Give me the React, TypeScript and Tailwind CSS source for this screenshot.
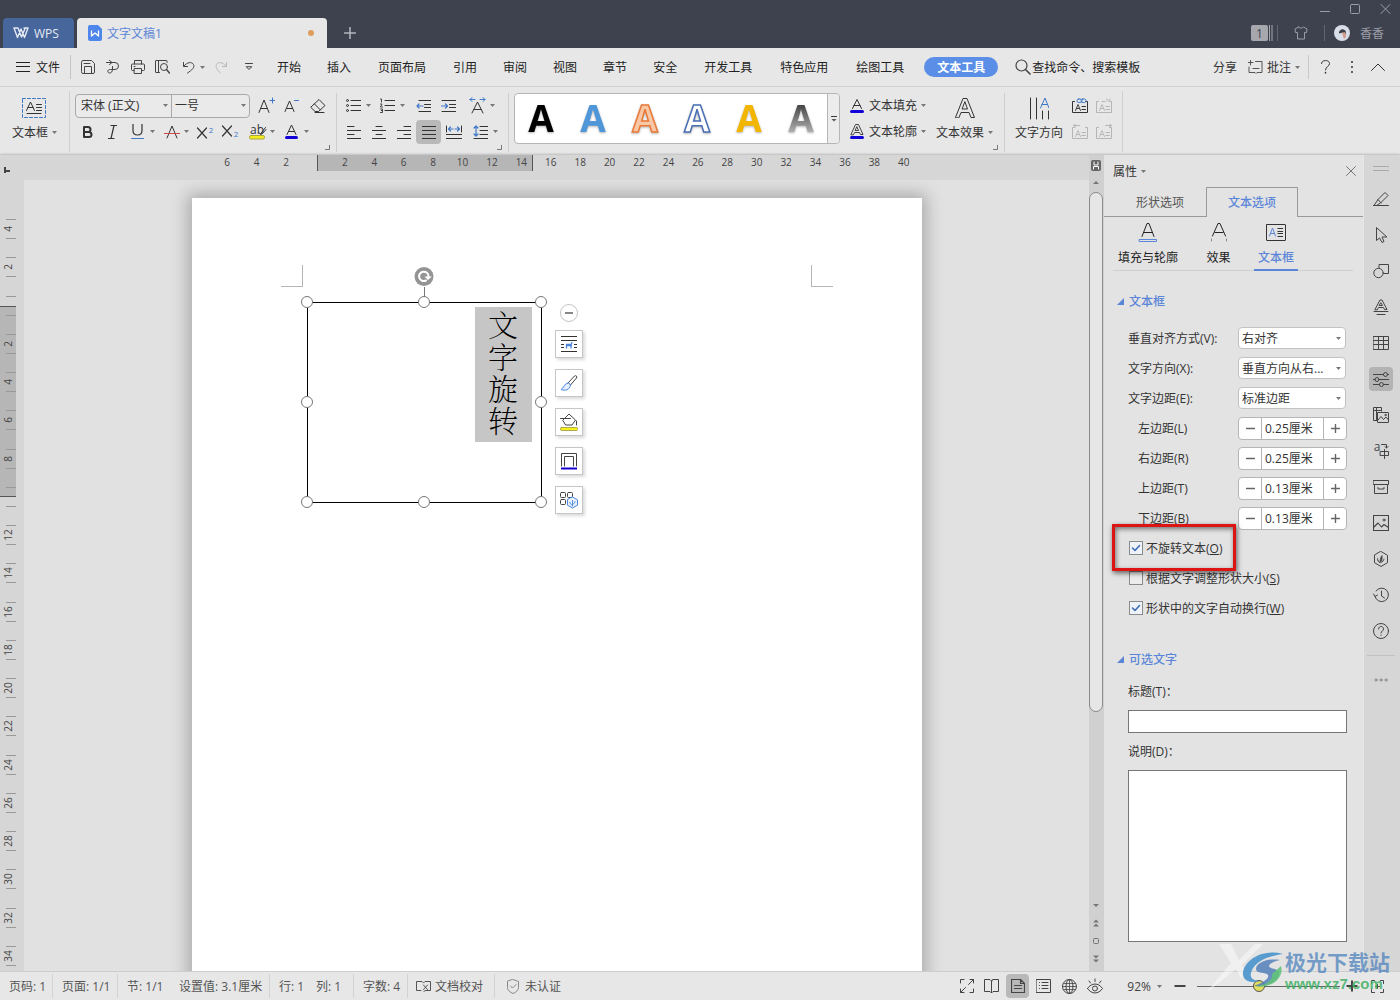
import type { ReactNode } from "react"
import clsx from "clsx"

const Svg = ({ w = 16, h = 16, className, children }: { w?: number; h?: number; className?: string; children: ReactNode }) => (
  <svg
    width={w}
    height={h}
    viewBox={`0 0 ${w} ${h}`}
    className={clsx("shrink-0", className)}
    fill="none"
    stroke="currentColor"
    strokeLinecap="round"
    strokeLinejoin="round"
    aria-hidden="true"
  >
    {children}
  </svg>
)

const Caret = ({ className }: { className?: string }) => (
  <svg width="5" height="3" viewBox="0 0 5 3" className={clsx("shrink-0 fill-[#777]", className)} aria-hidden="true">
    <path d="M0 0h5L2.5 3z" />
  </svg>
)

const Letter = ({ x, y, size = 16, fill = "currentColor", children }: { x: number; y: number; size?: number; fill?: string; children: string }) => (
  <text x={x} y={y} fontSize={size} fill={fill} stroke="none" textAnchor="middle">{children}</text>
)

/* ---------- title bar ---------- */

const TitleBar = () => (
  <header className="flex h-12 shrink-0 justify-between bg-[#3e424f]">
    <div className="flex items-end pl-[3px]">
      <button className="flex h-[30px] w-[71px] items-center gap-[5px] rounded-t-sm bg-[#47669c] pl-2.5 text-[#e4e9f2]">
        <Svg w={16} h={12}>
          <path d="M1 1h4l3.500 9L12 1.500M1 1l3.500 9.500L8 2l3.500 8.500L15 1h-4" strokeWidth="1.400" />
        </Svg>
        WPS
      </button>
      <div className="ml-[3px] flex h-[30px] w-[250px] items-center rounded-t bg-[#e7e7e7] pr-[13px] pl-[11px] text-[#5b86d8]">
        <Svg w={14} h={16}>
          <path d="M2 0h8l4 4v10a2 2 0 0 1-2 2H2a2 2 0 0 1-2-2V2a2 2 0 0 1 2-2z" fill="#4f86ec" stroke="none" />
          <path d="M3.500 6v5L7 8l3.500 3V6" stroke="#fff" strokeWidth="1.300" />
        </Svg>
        <span className="ml-[5px] flex-1">文字文稿1</span>
        <span className="size-1.5 rounded-full bg-[#dd9d5c]" />
      </div>
      <button aria-label="新建" className="flex size-[30px] items-center justify-center pl-4 text-[#b4b7bd]">
        <Svg w={12} h={12}><path d="M6 0.500v11M0.500 6h11" strokeWidth="1.500" /></Svg>
      </button>
    </div>
    <div className="flex flex-col items-end text-[#9a9da6]">
      <div className="flex h-[18px] items-center gap-5 pr-[9px]">
        <button aria-label="最小化"><Svg w={10} h={10}><path d="M0.500 7.500h9" /></Svg></button>
        <button aria-label="最大化"><Svg w={10} h={10}><rect x="0.500" y="0.500" width="9" height="9" rx="1" /></Svg></button>
        <button aria-label="关闭"><Svg w={11} h={10}><path d="M1 0.500l9 9M10 0.500l-9 9" /></Svg></button>
      </div>
      <div className="flex h-[30px] items-center pr-4">
        <span className="flex h-4 w-[17px] items-center justify-center rounded-xs bg-[#a6a8ae] text-[#3e424f]">1</span>
        <Svg w={5} h={16}><path d="M1.500 0v16M4 0v16" stroke="#a6a8ae" strokeLinecap="butt" /></Svg>
        <span className="ml-1 h-4 w-px bg-[#62656f]" />
        <button aria-label="皮肤" className="mx-4">
          <Svg w={14} h={14}><path d="M4.500 1 1 3l0.500 3.500h2V13h7V6.500h2L13 3 9.500 1C8.500 2.500 5.500 2.500 4.500 1z" /></Svg>
        </button>
        <span className="h-4 w-px bg-[#62656f]" />
        <Svg w={16} h={16} className="ml-[9px]">
          <circle cx="8" cy="8" r="8" fill="#d9dfe8" stroke="none" />
          <path d="M5 7c1.500-4 6-3.500 7 0l-1 4-2-3.500-4 1z" fill="#3c3d45" stroke="none" />
          <path d="M8 8l3-1 1 5-2 2z" fill="#d59c8e" stroke="none" />
        </Svg>
        <span className="ml-2.5">香香</span>
      </div>
    </div>
  </header>
)

/* ---------- menu ---------- */

const menus = ["开始", "插入", "页面布局", "引用", "审阅", "视图", "章节", "安全", "开发工具", "特色应用", "绘图工具"]

const MenuBar = () => (
  <nav className="flex h-[39px] shrink-0 items-center border-b border-[#d2d2d2] text-[#222]">
    <button className="flex items-center gap-1.5 pl-4">
      <Svg w={14} h={12}><path d="M0 1.500h14M0 5.500h14M0 10.500h14" /></Svg>
      文件
    </button>
    <span className="ml-2.5 h-6 w-px bg-[#c4c4c4]" />
    <div className="ml-1 flex items-center text-[#444]">
      <button aria-label="保存" className="flex w-[25px] justify-center">
        <Svg w={14} h={14}><path d="M0.500 2a1.500 1.500 0 0 1 1.500-1.500h8.500l3 3V12a1.500 1.500 0 0 1-1.500 1.500H2A1.500 1.500 0 0 1 0.500 12zM3.500 13V6.500h7V13M3 3.500h6" /></Svg>
      </button>
      <button aria-label="输出为PDF" className="flex w-[25px] justify-center">
        <Svg w={14} h={14}><path d="M0.500 2.500H9a3.500 3.500 0 0 1 0 7H6.500V6.500M3.500 0.500l2.500 2-2.500 2M6.500 9.500c0 2-1 3.500-3 3.500s-3-3.500 1-3.500h2" /></Svg>
      </button>
      <button aria-label="打印" className="flex w-[25px] justify-center">
        <Svg w={14} h={14}><path d="M3.500 4V0.500h7V4M3 10.500H1.500a1 1 0 0 1-1-1V5a1 1 0 0 1 1-1h11a1 1 0 0 1 1 1v4.500a1 1 0 0 1-1 1H11M3.500 8.500h7v5h-7zM3 6.500h1" /></Svg>
      </button>
      <button aria-label="打印预览" className="flex w-[25px] justify-center">
        <Svg w={15} h={14}><path d="M4.500 12.500H1a0.500 0.500 0 0 1-0.500-0.500V1A0.500 0.500 0 0 1 1 0.500h10.500a0.500 0.500 0 0 1 0.500 0.500v1.500M3.500 0.500v12" /><circle cx="9" cy="7" r="3.500" /><path d="M11.500 9.500l3 3.500" strokeWidth="1.500" /></Svg>
      </button>
      <button aria-label="撤销" className="flex w-8 items-center justify-end gap-[5px] pr-0.5">
        <Svg w={12} h={13}><path d="M0.500 1.500v4h4M1 5c3-4 8-4.500 9.500-1.500S9 9 4.500 12" /></Svg>
        <Caret />
      </button>
      <button aria-label="恢复" className="flex w-6 justify-end pr-1 text-[#b9b9b9]">
        <Svg w={12} h={13}><path d="M11.500 1.500v4h-4M11 5C8 1 3 0.500 1.500 3.500S3 9 5 12" /></Svg>
      </button>
      <button aria-label="自定义快速访问" className="flex w-7 justify-center pl-2">
        <Svg w={8} h={8}><path d="M0.500 0.500h7M1.500 4L4 6.500 6.500 4z" /></Svg>
      </button>
    </div>
    <div className="ml-[5px] flex items-center">
      {menus.map((m) => (
        <button key={m} className={clsx("whitespace-nowrap", m.length > 2 ? "px-[14px]" : "px-[13px]")}>{m}</button>
      ))}
      <button className="ml-1.5 h-5 rounded-full bg-[#5b8ee6] px-[13px] font-bold whitespace-nowrap text-white">文本工具</button>
    </div>
    <button className="ml-[17px] flex items-center whitespace-nowrap">
      <Svg w={17} h={16} className="text-[#444]"><circle cx="6.500" cy="6.500" r="5.500" strokeWidth="1.200" /><path d="M10.500 10.500l4.500 4.500" strokeWidth="1.600" /></Svg>
      查找命令、搜索模板
    </button>
    <div className="ml-auto flex items-center whitespace-nowrap text-[#333]">
      <button>分享</button>
      <button className="ml-[11px] flex items-center gap-1">
        <Svg w={15} h={14} className="text-[#555]"><path d="M0 2.500h5M2.500 0v5M7.500 1.500h6.500v11H9l-1 1-1-1H1V7M5 8.500h6" /></Svg>
        批注 <Caret />
      </button>
      <span className="ml-2 h-6 w-px bg-[#c9c9c9]" />
      <button aria-label="帮助" className="ml-3"><Svg w={9} h={14}><path d="M0.500 3.500c0-4 8-4 8 0 0 3-4 3-4 6.500" /><path d="M4.500 12.500v0.500" strokeWidth="1.500" /></Svg></button>
      <button aria-label="更多" className="ml-5"><Svg w={4} h={14}><path d="M2 2v0.100M2 7v0.100M2 12v0.100" strokeWidth="2" /></Svg></button>
      <button aria-label="折叠功能区" className="mr-[15px] ml-[17px]"><Svg w={14} h={8}><path d="M0.500 7.500L7 1l6.500 6.500" /></Svg></button>
    </div>
  </nav>
)

/* ---------- ribbon ---------- */

const Tool = ({ label, w = "w-[25px]", caret, active, children }: { label: string; w?: string; caret?: boolean; active?: boolean; children: ReactNode }) => (
  <button aria-label={label} className={clsx("flex h-6 shrink-0 items-center rounded", w, active && "bg-[#b9b9b9]")}>
    <span className={clsx("flex justify-center", caret ? "w-[25px]" : "w-full")}>{children}</span>
    {caret && <Caret />}
  </button>
)

const Launcher = () => (
  <Svg w={5} h={5} className="absolute right-[6px] bottom-0.5 text-[#777]"><path d="M4.500 0v4.500H0" /></Svg>
)

const Row = ({ children }: { children: ReactNode }) => <div className="flex h-[25px] items-center">{children}</div>

const FontGroup = () => (
  <div className="relative flex w-[267px] shrink-0 flex-col gap-px border-r border-[#cfcfcf] pl-[5px]">
    <Row>
      <div className="mr-[3px] flex h-6 w-[175px] rounded border border-[#a9a9a9] bg-[#eaeaea]">
        <div className="relative flex w-24 items-center border-r border-[#a9a9a9]">
          <select aria-label="字体" className="w-full appearance-none pl-[5px] outline-none"><option>宋体 (正文)</option></select>
          <Caret className="pointer-events-none absolute right-[3px]" />
        </div>
        <div className="relative flex flex-1 items-center">
          <select aria-label="字号" className="w-full appearance-none pl-[3px] outline-none"><option>一号</option></select>
          <Caret className="pointer-events-none absolute right-[3px]" />
        </div>
      </div>
      <Tool label="增大字号" w="w-[26px]">
        <Svg w={17} h={17}><path d="M1 15.500L6 3l5 12.500M3 11.500h6" /><path d="M14.500 1v5M12 3.500h5" stroke="#3f78c6" /></Svg>
      </Tool>
      <Tool label="减小字号" w="w-[26px]">
        <Svg w={16} h={17}><path d="M1 14.500L5.500 4l4.500 10.500M3 11.500h5.500" /><path d="M10.500 3.500h4" stroke="#3f78c6" /></Svg>
      </Tool>
      <Tool label="清除格式" w="w-[27px]">
        <Svg w={17} h={16}><path d="M1 9l8-7.500 6 6-6.500 6H5.500zM4.500 6l6 6M5 14.500h9" /></Svg>
      </Tool>
    </Row>
    <Row>
      <Tool label="加粗"><Svg w={11} h={12}><path d="M2 1h4a2.500 2.500 0 0 1 0 5H2zM2 6h5a2.500 2.500 0 0 1 0 5H2z" strokeWidth="2" /></Svg></Tool>
      <Tool label="倾斜"><Svg w={9} h={14}><path d="M3 0.500h5.500M0.500 13.500H6M6 0.500l-3 13" strokeWidth="1.200" /></Svg></Tool>
      <Tool label="下划线" w="w-[34px]" caret>
        <Svg w={13} h={15}><path d="M2 0.500v6c0 6 9 6 9 0v-6" strokeWidth="1.200" /><path d="M0.500 14.500h12" stroke="#3f78c6" /></Svg>
      </Tool>
      <Tool label="删除线" w="w-[34px]" caret>
        <Svg w={16} h={14}><path d="M3 13L8 1l5 12" /><path d="M0 8.500h16" stroke="#d04848" /></Svg>
      </Tool>
      <Tool label="上标"><Svg w={19} h={15}><path d="M1.500 4l9 10M10.500 4l-9 10" strokeWidth="1.200" /><Letter x={15} y={9} size={8} fill="#3f78c6">2</Letter></Svg></Tool>
      <Tool label="下标"><Svg w={19} h={15}><path d="M1.500 2l9 10M10.500 2l-9 10" strokeWidth="1.200" /><Letter x={15} y={13} size={8} fill="#3f78c6">2</Letter></Svg></Tool>
      <span className="w-0.5" />
      <Tool label="突出显示" w="w-[34px]" caret>
        <Svg w={19} h={17}><Letter x={9} y={11} size={12}>ab</Letter><path d="M17.500 4.500l-4 5-1 2 2-1 3.500-4" /><rect x="1.500" y="12.500" width="15" height="3.500" rx="1.500" fill="#f5ee1f" stroke="#a9a53d" /></Svg>
      </Tool>
      <Tool label="字体颜色" w="w-[34px]" caret>
        <Svg w={13} h={16}><path d="M2 10.500L6.500 1 11 10.500M3.500 7.500h6" /><path d="M1.500 13.500h10" stroke="#1200d8" strokeWidth="3" /></Svg>
      </Tool>
    </Row>
    <Launcher />
  </div>
)

const ParagraphGroup = () => (
  <div className="relative flex w-[172px] shrink-0 flex-col gap-px border-r border-[#cfcfcf] pl-1">
    <Row>
      <Tool label="项目符号" w="w-[34px]" caret>
        <Svg w={15} h={15}><path d="M5 2.500h10M5 7.500h10M5 12.500h10" /><circle cx="1.500" cy="2.500" r="1" /><circle cx="1.500" cy="7.500" r="1" /><circle cx="1.500" cy="12.500" r="1" /></Svg>
      </Tool>
      <Tool label="编号" w="w-[34px]" caret>
        <Svg w={15} h={15}><path d="M5 2.500h10M5 7.500h10M5 12.500h10" /><path d="M0.500 1h1V4M0.500 6h1.500L0.500 9h2M0.500 11h2v1.500H1h1.500V14.500h-2" strokeWidth="0.900" /></Svg>
      </Tool>
      <span className="w-0.5" />
      <Tool label="减少缩进">
        <Svg w={15} h={14}><path d="M3 1.500h12M8.500 5.500h6.500M8.500 8.500h6.500M3 12.500h12" /><path d="M1 7h6M3 5L1 7l2 2" stroke="#3f78c6" strokeWidth="1.200" /></Svg>
      </Tool>
      <Tool label="增加缩进">
        <Svg w={15} h={14}><path d="M1 1.500h14M8.500 5.500h6.500M8.500 8.500h6.500M1 12.500h14" /><path d="M0.500 7h6M4.500 5l2 2-2 2" stroke="#3f78c6" strokeWidth="1.200" /></Svg>
      </Tool>
      <span className="w-1" />
      <Tool label="字符缩放" w="w-[32px]" caret>
        <Svg w={17} h={17}><path d="M3 16L8.500 5 14 16M5 12.500h7" /><path d="M1 2.500h5M3 0.500l-2 2 2 2M11 2.500h5M14 0.500l2 2-2 2" stroke="#3f78c6" /></Svg>
      </Tool>
    </Row>
    <Row>
      <Tool label="左对齐"><Svg w={14} h={14}><path d="M0 1.500h7M0 5.500h14M0 9.500h7M0 13.500h14" /></Svg></Tool>
      <Tool label="居中"><Svg w={14} h={14}><path d="M4 1.500h6M0 5.500h14M4 9.500h6M0 13.500h14" /></Svg></Tool>
      <Tool label="右对齐"><Svg w={14} h={14}><path d="M7 1.500h7M0 5.500h14M7 9.500h7M0 13.500h14" /></Svg></Tool>
      <Tool label="两端对齐" active><Svg w={14} h={14}><path d="M0 1.500h14M0 5.500h14M0 9.500h14M0 13.500h14" /></Svg></Tool>
      <Tool label="分散对齐">
        <Svg w={16} h={14}><path d="M0.500 1v6M15.500 1v6M0 9.500h16M0 13.500h16" /><path d="M3 4h4M4.500 2l-2 2 2 2M9 4h4M11.500 2l2 2-2 2" stroke="#3f78c6" strokeWidth="1.200" /></Svg>
      </Tool>
      <span className="w-0.5" />
      <Tool label="行距" w="w-[34px]" caret>
        <Svg w={15} h={14}><path d="M7 1.500h8M7 5.500h8M7 9.500h8M1 13.500h14" /><path d="M3 1v10M1 3l2-2 2 2M1 9l2 2 2-2" stroke="#3f78c6" strokeWidth="1.200" /></Svg>
      </Tool>
    </Row>
    <Launcher />
  </div>
)

const wordArt = [
  { fill: "#000", stroke: "none" },
  { fill: "#4f97d9", stroke: "none" },
  { fill: "#f7c7a6", stroke: "#ea7a37" },
  { fill: "#fff", stroke: "#4a6fb5" },
  { fill: "#f2b600", stroke: "none" },
  { fill: "url(#grayFade)", stroke: "none" },
]

const TextStyleGroup = () => (
  <div className="relative flex w-[496px] shrink-0 border-r border-[#cfcfcf] pl-[5px]">
    <div className="flex h-[51px] rounded border border-[#b5b5b5] bg-white">
      {wordArt.map((a, i) => (
        <button key={i} aria-label={`艺术字样式${i + 1}`} className="w-[52px]">
          <svg width="52" height="49" viewBox="0 0 52 49" className="font-bold drop-shadow-[0_1px_1px_rgba(0,0,0,0.3)]">
            <defs>
              <linearGradient id="grayFade" x1="0" y1="0" x2="0" y2="1">
                <stop offset="0.250" stopColor="#444" />
                <stop offset="0.850" stopColor="#bbb" />
              </linearGradient>
            </defs>
            <text x="26" y="38" fontSize="37" textAnchor="middle" fill={a.fill} stroke={a.stroke} strokeWidth="1.500">A</text>
          </svg>
        </button>
      ))}
      <button aria-label="更多样式" className="flex w-3 items-center justify-center rounded-r border-l border-[#b5b5b5] bg-[#ececec]">
        <Svg w={6} h={6}><path d="M0.500 0.500h5" /><path d="M0.500 3h5L3 5.500z" fill="#555" stroke="none" /></Svg>
      </button>
    </div>
    <div className="ml-2.5 flex flex-col gap-px">
      <Row>
        <button className="flex items-center whitespace-nowrap">
          <Svg w={14} h={16} className="mr-[5px]"><path d="M2.500 10.500L7 1.500l4.500 9M4 7.500h6" /><path d="M1.500 13.500h11" stroke="#1200d8" strokeWidth="3" /></Svg>
          文本填充<Caret className="ml-1" />
        </button>
      </Row>
      <Row>
        <button className="flex items-center whitespace-nowrap">
          <Svg w={14} h={16} className="mr-[5px]"><path d="M1 10.500L5.500 0.500h3l4.500 10h-2.500l-1-2h-5l-1 2zM5.500 6.500h3L7 3z" strokeWidth="0.900" /><path d="M1.500 13.500h11" stroke="#1200d8" strokeWidth="3" /></Svg>
          文本轮廓<Caret className="ml-1" />
        </button>
      </Row>
    </div>
    <button className="ml-2.5 flex h-[51px] flex-col items-center gap-1.5 pt-[5px] whitespace-nowrap">
      <Svg w={20} h={20}><path d="M0.500 19.500L8 0.500h4l7.500 19H16l-2-5H6l-2 5zM7.500 11h5L10 4z" /></Svg>
      <span className="flex items-center gap-1">文本效果<Caret /></span>
    </button>
    <Launcher />
  </div>
)

const BoxIcon = ({ muted, mark }: { muted?: boolean; mark: "link" | "break" | "prev" | "next" }) => (
  <Svg w={17} h={16} className={muted ? "text-[#b5b5b5]" : "text-[#333]"}>
    <path d="M2.500 3.500h-2v11h15v-11h-2" />
    <path d="M3.500 12.500l2.500-6 2.500 6M4.500 10.500h3" strokeWidth="0.900" />
    <path d="M10 8.500h3.500M10 11.500h3.500" />
    {mark === "link" && <g stroke="#3f78c6"><rect x="5" y="1" width="5" height="3.500" rx="1.700" /><rect x="9" y="1" width="5" height="3.500" rx="1.700" /></g>}
    {mark === "break" && <path d="M6 3.500h3M11 1v2M14 1l-1 2" />}
    {mark === "prev" && <path d="M1.500 1.500h6M3.500 0l-2 1.500 2 1.500" />}
    {mark === "next" && <path d="M9.500 1.500h6M13.500 0l2 1.500-2 1.500" />}
  </Svg>
)

const Ribbon = () => (
  <div className="flex h-[68px] shrink-0 pt-1 pb-[3px] text-[#333]">
    <div className="flex w-[70px] shrink-0 justify-center border-r border-[#cfcfcf] pt-0.5">
      <button className="flex h-[51px] flex-col items-center gap-1.5 pt-[5px] whitespace-nowrap">
        <Svg w={24} h={20}><rect x="0.500" y="0.500" width="23" height="19" stroke="#3f78c6" strokeDasharray="3 2" /><path d="M4.500 12.500L8.500 4l4 8.500M6 9.500h5M14.500 6.500h5M14.500 9.500h5M14.500 12.500h5M5 15.500h14" /></Svg>
        <span className="flex items-center gap-1">文本框<Caret /></span>
      </button>
    </div>
    <div className="flex pt-0.5"><FontGroup /><ParagraphGroup /><TextStyleGroup /></div>
    <div className="flex w-[118px] shrink-0 border-r border-[#cfcfcf] pt-0.5 pl-2.5">
      <button className="flex h-[51px] flex-col items-center gap-1 pt-1 whitespace-nowrap">
        <Svg w={20} h={23}><path d="M1.500 1v21M7.500 1v21M13.500 14v8M19.500 14v8" /><path d="M11.500 11L16 1l4 10M13 7.500h5.500" stroke="#3f78c6" /></Svg>
        文字方向
      </button>
      <div className="ml-[5px] flex flex-col gap-px">
        <Row>
          <Tool label="创建链接" w="w-6"><BoxIcon mark="link" /></Tool>
          <Tool label="断开链接" w="w-6"><BoxIcon muted mark="break" /></Tool>
        </Row>
        <Row>
          <Tool label="前一文本框" w="w-6"><BoxIcon muted mark="prev" /></Tool>
          <Tool label="下一文本框" w="w-6"><BoxIcon muted mark="next" /></Tool>
        </Row>
      </div>
    </div>
  </div>
)

/* ---------- document ---------- */

const hMarks = ["6", "4", "2", "", "2", "4", "6", "8", "10", "12", "14", "16", "18", "20", "22", "24", "26", "28", "30", "32", "34", "36", "38", "40"]
const vMarks = ["4", "2", "", "2", "4", "6", "8", "", "12", "14", "16", "18", "20", "22", "24", "26", "28", "30", "32", "34"]

const HorizontalRuler = () => (
  <div className="relative flex h-[25px] shrink-0 justify-center bg-[#d6d6d6] pl-[18px] text-[10px] leading-[15px] text-[#444]">
    <div className="relative grid w-[706px] grid-cols-24 text-center">
      <span className="absolute top-0 left-[104px] h-4 w-[216px] border-x border-[#555] bg-[#b6b6b6]" />
      {hMarks.map((m, i) => <span key={i} className="relative">{m}</span>)}
    </div>
  </div>
)

const VerticalRuler = () => (
  <div className="w-6 shrink-0 overflow-hidden bg-[#d6d6d6] text-[10px] text-[#444]">
    <Svg w={16} h={25} className="block"><path d="M5 12v6M4 16h6" strokeWidth="2" strokeLinecap="butt" /></Svg>
    <div className="relative mt-[30px] grid h-[765px] grid-rows-20">
      <span className="absolute top-[96px] left-0 h-[191px] w-4 border-y border-[#555] bg-[#b6b6b6]" />
      {vMarks.map((m, i) => (
        <div key={i} className="relative flex items-center pl-1.5">
          <span className="flex h-5 w-2.5 items-center border-y border-[#999]">
            <span className="-ml-1 w-3 -rotate-90 text-center leading-3">{m}</span>
          </span>
        </div>
      ))}
    </div>
  </div>
)

const handles = [
  "-top-[7px] -left-[7px]", "-top-[7px] left-[110px]", "-top-[7px] -right-1.5",
  "top-[93px] -left-[7px]", "top-[93px] -right-1.5",
  "-bottom-1.5 -left-[7px]", "-bottom-1.5 left-[110px]", "-bottom-1.5 -right-1.5",
]

const floatTools: { label: string; icon: ReactNode }[] = [
  { label: "环绕方式", icon: <><path d="M1 1.500h16M1 5.500h16M1 9.500h3M1 12.500h3M14 9.500h3M14 12.500h3M1 16.500h16" stroke="#333" strokeLinecap="butt" /><path d="M6.500 13V9.500h4.500L12 7.500M11 9.500v3.500M6.500 10.500h5" stroke="#4a86e0" strokeWidth="1.300" /></> },
  { label: "形状样式", icon: <><path d="M8 9l6.500-7c1.500-1 3 0.500 2 2L10.500 11z" stroke="#444" /><path d="M8 9C4 9.500 4 14 1 15.500c4 1.500 9 0.500 9.500-4.500z" stroke="#4a86e0" fill="#e6effc" /></> },
  { label: "形状填充", icon: <><path d="M3 7l6-6 6.500 6L12 12H6zM0.500 5.500h10M16.500 8v4" stroke="#444" /><rect x="0.500" y="14.500" width="17" height="3" rx="1" fill="#f6f01d" stroke="#8d8a38" strokeWidth="0.700" /></> },
  { label: "形状轮廓", icon: <><path d="M1.500 14V1.500h15V14M4.500 14V4.500h9V14" stroke="#444" /><path d="M1 16.500h16" stroke="#1400d0" strokeWidth="2" strokeLinecap="butt" /></> },
  { label: "更多", icon: <><rect x="0.500" y="1.500" width="5" height="5" rx="1" stroke="#444" /><rect x="7.500" y="1.500" width="5" height="5" rx="1" stroke="#444" /><rect x="0.500" y="8.500" width="5" height="5" rx="1" stroke="#444" /><path d="M12.500 6l5 2.800v5.400l-5 2.800-5-2.800V8.800z" fill="#e8f0fc" stroke="#4a86e0" /><path d="M12.500 15V9.500M12.500 14c-2 0-2.500-1.500-2.500-2.500M12.500 13c1.500 0 2.500-1 2.500-2.500" stroke="#4a86e0" strokeWidth="0.900" /></> },
]

const Page = () => (
  <div className="relative mx-auto mt-[18px] h-[900px] w-[730px] bg-white shadow-[0_0_16px_4px_rgba(0,0,0,0.25)]">
    <span className="absolute top-[67px] left-[89px] size-[22px] border-r border-b border-[#b5b5b5]" />
    <span className="absolute top-[67px] left-[619px] size-[22px] border-b border-l border-[#b5b5b5]" />
    <div className="absolute top-[104px] left-[115px] h-[201px] w-[235px] border border-black">
      <span className="absolute -top-4 left-[116px] h-4 w-px bg-[#777]" />
      <Svg w={20} h={20} className="absolute -top-9 left-[106px]">
        <circle cx="10" cy="9.500" r="9.500" fill="#949494" stroke="none" />
        <path d="M14.500 9.500a4.700 4.700 0 1 0-2.500 4" stroke="#fff" strokeWidth="2" />
        <path d="M10.500 9.500h7.500L14 13z" fill="#fff" stroke="none" />
      </Svg>
      <p className="absolute top-1 right-[9px] flex h-[135px] w-[57px] items-start justify-center bg-[#c6c6c6] font-['Noto_Serif_CJK_SC','Noto_Sans_CJK_SC',serif] text-[30px] leading-[32px] font-thin text-black">
        <span className="w-[30px] break-all">文字旋转</span>
      </p>
      {handles.map((h) => <span key={h} className={clsx("absolute size-3 rounded-full border border-[#777] bg-white", h)} />)}
    </div>
    <div className="absolute top-[106px] left-[363px] flex flex-col items-center gap-[11px]">
      <button aria-label="收起" className="-mb-[3px] flex size-[18px] items-center justify-center rounded-full border border-[#c4c4c4] bg-white text-[#888]">
        <Svg w={8} h={2}><path d="M0 1h8" strokeWidth="2" strokeLinecap="butt" /></Svg>
      </button>
      {floatTools.map((t) => (
        <button key={t.label} aria-label={t.label} className="flex size-7 items-center justify-center border border-[#c6c6c6] bg-white shadow-[2px_2px_3px_rgba(0,0,0,0.15)]">
          <Svg w={18} h={18}>{t.icon}</Svg>
        </button>
      ))}
    </div>
  </div>
)

const ScrollBar = () => (
  <div className="flex w-[15px] shrink-0 flex-col items-center bg-[#d0d0d0] pt-[5px] pr-px pb-2 text-[#777]">
    <Svg w={10} h={11}><rect x="0.500" y="0.500" width="9" height="10" rx="1" fill="#666" stroke="#666" /><path d="M3 2v3h4V2M2.500 9V6.500h5V9" stroke="#fff" /></Svg>
    <Svg w={6} h={4} className="mt-[9px]"><path d="M0 4l3-3 3 3z" fill="currentColor" stroke="none" /></Svg>
    <div className="mt-2 h-[520px] w-3.5 rounded-full border border-[#8c8c8c] bg-[#e6e6e6]" />
    <div className="mt-auto flex flex-col items-center gap-[11px]">
      <Svg w={6} h={4}><path d="M0 0h6L3 3z" fill="currentColor" stroke="none" /></Svg>
      <Svg w={6} h={8}><path d="M0 3.500l3-3 3 3zM0 7.500l3-3 3 3z" fill="currentColor" stroke="none" /></Svg>
      <Svg w={6} h={6}><rect x="0.500" y="0.500" width="5" height="5" rx="1" /></Svg>
      <Svg w={6} h={8}><path d="M0 0.500h6l-3 3zM0 4.500h6l-3 3z" fill="currentColor" stroke="none" /></Svg>
    </div>
  </div>
)

/* ---------- property panel ---------- */

const selects = [
  { id: "valign", label: "垂直对齐方式(V):", value: "右对齐" },
  { id: "direction", label: "文字方向(X):", value: "垂直方向从右..." },
  { id: "margin", label: "文字边距(E):", value: "标准边距" },
]
const margins = [
  { id: "left", label: "左边距(L)", value: "0.25厘米" },
  { id: "right", label: "右边距(R)", value: "0.25厘米" },
  { id: "top", label: "上边距(T)", value: "0.13厘米" },
  { id: "bottom", label: "下边距(B)", value: "0.13厘米" },
]
const checks = [
  { id: "norotate", text: "不旋转文本", hotkey: "O", on: true, marked: true },
  { id: "resize", text: "根据文字调整形状大小", hotkey: "S", on: false },
  { id: "wrap", text: "形状中的文字自动换行", hotkey: "W", on: true },
]

const SectionTitle = ({ children }: { children: ReactNode }) => (
  <h3 className="flex h-5 items-center gap-[5px] pl-[13px] font-medium text-[#5b86d8]">
    <Svg w={7} h={7}><path d="M7 0v7H0z" fill="currentColor" stroke="none" /></Svg>
    {children}
  </h3>
)

const Panel = () => (
  <aside className="flex w-[259px] shrink-0 flex-col bg-[#e3e3e3] text-[#333]">
    <div className="flex h-8 items-center pr-[7px] pl-[9px]">
      <button className="flex items-center gap-1">属性<Caret /></button>
      <button aria-label="关闭面板" className="ml-auto text-[#777]"><Svg w={10} h={10}><path d="M0.500 0.500l9 9M9.500 0.500l-9 9" /></Svg></button>
    </div>
    <div className="flex h-[30px] text-[#555]">
      <button className="w-[102px] border-b border-[#999] pt-px pl-2.5">形状选项</button>
      <button className="w-[92px] border border-b-0 border-[#999] font-medium text-[#5b86d8]">文本选项</button>
      <span className="flex-1 border-b border-[#999]" />
    </div>
    <div className="mr-2.5 ml-[9px] flex h-[54px] border-b border-[#cfcfcf] text-[#222]">
      <button className="flex w-[70px] flex-col items-center gap-1.5 pt-1.5 whitespace-nowrap">
        <Svg w={20} h={20}><path d="M4 13.500L9 0.500h2l5 13M5.500 9.500h9" /><rect x="1.500" y="16.500" width="17" height="2" stroke="#5b86d8" /></Svg>
        填充与轮廓
      </button>
      <button className="flex w-[71px] flex-col items-center gap-1.5 pt-1.5">
        <Svg w={20} h={20}><path d="M3.500 13L9 0.500h2L16.500 13M6 9.500h8" /><path d="M2.500 16v2M17.500 16v2" stroke="#888" /></Svg>
        效果
      </button>
      <button className="flex h-[54px] w-11 flex-col items-center gap-1.5 border-b-2 border-[#5b86d8] pt-1.5 font-medium whitespace-nowrap text-[#5b86d8]">
        <Svg w={20} h={20}><rect x="0.500" y="1.500" width="19" height="16" rx="0.500" stroke="#333" /><path d="M3.500 13L6.500 5l3 8M4.500 10.500h4" /><path d="M11.500 5.500h5.500M11.500 8.500h5.500M11.500 10.500h5.500M11.500 13.500h5.500" stroke="#333" strokeLinecap="butt" /></Svg>
        文本框
      </button>
    </div>

    <div className="mt-5"><SectionTitle>文本框</SectionTitle></div>
    <div className="mt-3 pr-4 pl-6">
      {selects.map((s) => (
        <div key={s.id} className="flex h-[30px] items-center">
          <label htmlFor={s.id} className="flex-1">{s.label}</label>
          <div className="relative mr-px flex items-center">
            <select id={s.id} className="h-[22px] w-[108px] appearance-none rounded border border-[#c2c2c2] bg-white px-[3px] outline-none">
              <option>{s.value}</option>
            </select>
            <Caret className="pointer-events-none absolute right-[5px]" />
          </div>
        </div>
      ))}
      {margins.map((m) => (
        <div key={m.id} className="flex h-[30px] items-center pl-2.5">
          <label htmlFor={m.id} className="flex-1">{m.label}</label>
          <div className="flex h-[23px] w-[109px] rounded border border-[#b5b5b5] bg-white text-[#666]">
            <button aria-label="减少" className="flex w-[22px] items-center justify-center"><Svg w={9} h={9}><path d="M0.500 4.500h8" strokeWidth="1.400" /></Svg></button>
            <input id={m.id} defaultValue={m.value} className="w-0 flex-1 border-x border-[#b5b5b5] pl-[3px] text-[#333] outline-none" />
            <button aria-label="增加" className="flex w-[22px] items-center justify-center"><Svg w={9} h={9}><path d="M0.500 4.500h8M4.500 0.500v8" strokeWidth="1.400" /></Svg></button>
          </div>
        </div>
      ))}
      {checks.map((c) => (
        <div key={c.id} className="relative flex h-[30px] items-center">
          <label className="flex items-center gap-[3px] whitespace-nowrap">
            <span className="relative ml-px flex size-3.5 items-center justify-center">
              <input type="checkbox" id={c.id} defaultChecked={c.on} className="peer absolute inset-0 appearance-none border border-[#8a8a8a] bg-[#ececec] checked:bg-[#eef3fa]" />
              <Svg w={10} h={8} className="relative hidden text-[#3f6fb8] peer-checked:block"><path d="M1.500 4l2.500 2.500L8.500 1.500" strokeWidth="1.600" /></Svg>
            </span>
            <span>{c.text}(<u>{c.hotkey}</u>)</span>
          </label>
          {c.marked && <span className="pointer-events-none absolute -top-[9px] -left-4 z-10 h-[47px] w-[124px] border-3 border-[#dd1414] shadow-[1px_2px_5px_rgba(0,0,0,0.6),inset_1px_2px_5px_rgba(0,0,0,0.5)]" />}
        </div>
      ))}
    </div>

    <div className="mt-[26px]"><SectionTitle>可选文字</SectionTitle></div>
    <div className="flex flex-1 flex-col pt-3 pr-4 pb-[29px] pl-6">
      <label htmlFor="alt-title" className="leading-[21px]">标题(T)：</label>
      <input id="alt-title" className="mt-2 h-[23px] border border-[#767676] bg-white px-1 outline-none" />
      <label htmlFor="alt-desc" className="mt-2 leading-[21px]">说明(D)：</label>
      <textarea id="alt-desc" className="mt-2 flex-1 resize-none border border-[#767676] bg-white p-1 outline-none" />
    </div>
  </aside>
)

const sideTools: { label: string; active?: boolean; icon: ReactNode }[] = [
  { label: "编辑", icon: <path d="M0.500 14.500h15M1 14.500L5 8.500l7-7 3 3-7.500 7.500-4 2.500M5 8.500l3 3.500" /> },
  { label: "选择", icon: <path d="M3.500 1v12.500l3-2.500L9 15.500l2-1-2-4.500h4.500z" /> },
  { label: "形状", icon: <><path d="M6 5V1.500h9.500v9H11" /><circle cx="5.500" cy="10" r="4.700" /></> },
  { label: "艺术字", icon: <path d="M2 10.500L7 1h2l5 9.500h-2.500l-1-2h-5l-1 2zM6.500 6.500h3L8 4zM1 12.500h14M4 15.500h8" /> },
  { label: "表格", icon: <path d="M0.500 1.500h15v13H0.500zM0.500 5.500h15M0.500 9.500h15M5.500 1.500v13M10.500 1.500v13" /> },
  { label: "属性", active: true, icon: <><path d="M0 3.500h10.500M14.500 3.500H16M0 8.500h2M6 8.500h10M0 13.500h6.500M10.500 13.500H16" /><circle cx="12.500" cy="3.500" r="2" /><circle cx="4" cy="8.500" r="2" /><circle cx="8.500" cy="13.500" r="2" /></> },
  { label: "图库", icon: <><path d="M4 13.500H0.500v-13h8V4M3.500 0.500v13M0.500 3.500h8" /><rect x="4.500" y="5.500" width="11" height="10" rx="0.500" fill="#d6d6d6" /><path d="M5 13l3-3.500 2.500 3L13 10l2.500 3" /><circle cx="12.500" cy="8" r="0.700" /></> },
  { label: "翻译", icon: <><Letter x={4} y={8} size={12}>a</Letter><path d="M7.500 8.500h8v4h-8zM11.500 6.500V16M8.500 1.500h5v3.500M12 3.500L13.500 5 15 3.500" /></> },
  { label: "存档", icon: <path d="M0.500 1.500h15v4H0.500zM1.500 5.500v9h13v-9M5 8.500v1.500h6V8.500" /> },
  { label: "图片", icon: <><path d="M0.500 0.500h15v15H0.500zM1 12l4-4 3.500 4L11 9.500l4.500 3" strokeWidth="1.100" /><circle cx="11" cy="5" r="1" /></> },
  { label: "稻壳", icon: <><path d="M8 0.500l6.500 3.800v7.400L8 15.500l-6.500-3.800V4.300z" /><path d="M7 11.500c0-3 0.500-5 2-7 0.500 3 0 5.500-2 7zM6.500 11.500c-1.500-1-2-2-2-4M8 11.500c1.500-0.500 3-2 3-3.500" fill="currentColor" strokeWidth="0.700" /></> },
  { label: "历史", icon: <><path d="M2 9.500A6.800 6.800 0 1 0 3 4M0.500 7L2 9.500 4.500 8M8.500 4v5l3 2" /></> },
  { label: "帮助中心", icon: <><circle cx="8" cy="8" r="7.500" /><path d="M5.500 6c0-3.500 5-3.500 5 0 0 2-2.500 2-2.500 4M8 12v0.300" /></> },
]

const SideBar = () => (
  <div className="ml-px flex w-9 shrink-0 flex-col items-center bg-[#d6d6d6] pr-0.5 text-[#444]">
    <Svg w={16} h={6} className="mt-2.5 mb-[10px] text-[#aaa]"><path d="M0 1.500h16M0 5.500h16" /></Svg>
    {sideTools.map((t) => (
      <button key={t.label} aria-label={t.label} className="flex h-9 items-center justify-center">
        <span className={clsx("flex size-6 items-center justify-center rounded", t.active && "bg-[#b3b3b3]")}><Svg>{t.icon}</Svg></span>
      </button>
    ))}
    <span className="mt-1.5 h-px w-7 bg-[#c2c2c2]" />
    <button aria-label="更多" className="mt-[22px] text-[#888]"><Svg w={14} h={4}><circle cx="2" cy="2" r="1.100" /><circle cx="7" cy="2" r="1.100" /><circle cx="12" cy="2" r="1.100" /></Svg></button>
  </div>
)

/* ---------- status bar ---------- */

const Bar = () => <span className="h-6 w-px bg-[#d2d2d2]" />

const StatusBar = () => (
  <footer className="flex h-[29px] shrink-0 items-center border-t border-[#cdcdcd] whitespace-nowrap text-[#555]">
    <div className="flex items-center">
      <span className="w-[52px] pl-[9px]">页码: 1</span><Bar />
      <span className="w-16 pl-[9px]">页面: 1/1</span><Bar />
      <span className="w-[61px] pl-[9px]">节: 1/1</span>
      <span className="w-[90px]">设置值: 3.1厘米</span><Bar />
      <span className="w-[46px] pl-[9px]">行: 1</span>
      <span className="w-[37px]">列: 1</span><Bar />
      <span className="w-[53px] pl-[9px]">字数: 4</span><Bar />
      <button className="flex w-[86px] items-center gap-1 pl-2">
        <Svg w={15} h={12}><path d="M5 10.500H0.500v-9h5.500L7.500 3 9 1.500h5.500v9H9L7.500 12M7.500 5l4 4.500M11.500 5l-4 4.500" /></Svg>
        文档校对
      </button>
      <Bar />
      <button className="flex items-center gap-1.5 pl-3">
        <Svg w={12} h={15} className="text-[#888]"><path d="M6 0.500l5.500 2v6c0 3-3 5-5.500 6-2.500-1-5.500-3-5.500-6v-6zM3.500 7l2 2L9 5.500" /></Svg>
        未认证
      </button>
    </div>
    <div className="ml-auto flex items-center pr-4 text-[#444]">
      <Tool label="全屏显示"><Svg w={14} h={14}><path d="M0.500 4V0.500H4M10 0.500h3.500V4M13.500 10v3.500H10M4 13.500H0.500V10M8.500 5.500l5-5M5.500 8.500l-5 5" /></Svg></Tool>
      <Tool label="阅读版式"><Svg w={15} h={14}><path d="M7.500 2L6 0.500H0.500v12H6L7.500 14 9 12.500h5.500v-12H9zM7.500 2v12" /></Svg></Tool>
      <span className="w-0.5" />
      <Tool label="页面视图" w="w-[23px]" active><Svg w={14} h={14}><path d="M0.500 0.500h9l4 4v9H0.500zM9.500 0.500v4h4M3.500 6.500h7M3.500 9.500h7" strokeWidth="1.200" /></Svg></Tool>
      <Tool label="大纲" w="w-7"><Svg w={15} h={14}><path d="M0.500 0.500h14v13H0.500zM6 3.500h6M6 6.500h6M6 9.500h6M3.500 3.500h0.100M3.500 6.500h0.100M3.500 9.500h0.100" /></Svg></Tool>
      <Tool label="Web版式" w="w-6"><Svg w={15} h={15}><circle cx="7.500" cy="7.500" r="7" /><ellipse cx="7.500" cy="7.500" rx="3.500" ry="7" /><path d="M0.500 7.500h14M7.500 0.500v14M2 4.500h11M2 10.500h11" strokeWidth="0.800" /></Svg></Tool>
      <Tool label="护眼模式" w="w-[27px]"><Svg w={16} h={16}><path d="M0.500 10.500c4-6 11-6 15 0-4 6-11 6-15 0zM8 1v2.500M2 3l1.500 2M14 3l-1.500 2" /><circle cx="8" cy="10.500" r="2.500" /></Svg></Tool>
      <span className="ml-[7px]"><Bar /></span>
      <button className="ml-3 flex items-center gap-1.5">92% <Caret /></button>
      <button aria-label="缩小" className="ml-3"><Svg w={12} h={12}><path d="M0.500 6h11" strokeWidth="2" strokeLinecap="butt" /></Svg></button>
      <input
        type="range"
        aria-label="显示比例"
        defaultValue={43}
        className="mx-[11px] h-px w-[143px] appearance-none bg-[#666] [&::-webkit-slider-thumb]:size-3 [&::-webkit-slider-thumb]:appearance-none [&::-webkit-slider-thumb]:rounded-full [&::-webkit-slider-thumb]:border [&::-webkit-slider-thumb]:border-[#555] [&::-webkit-slider-thumb]:bg-[#e3dc5c]"
      />
      <button aria-label="放大" className="-ml-[5px]"><Svg w={12} h={12}><path d="M0.500 6h11M6 0.500v11" strokeWidth="2" strokeLinecap="butt" /></Svg></button>
      <button aria-label="适合页面" className="ml-[13px]"><Svg w={13} h={13}><path d="M0.500 3.500v-3h3M9.500 0.500h3v3M12.500 9.500v3h-3M3.500 12.500h-3v-3M4.500 6.500h4M6.500 4.500v4" /></Svg></button>
    </div>
  </footer>
)

const SiteMark = () => (
  <div className="pointer-events-none absolute right-2.5 bottom-1.5 flex items-end">
    <svg width="84" height="50" viewBox="0 0 84 50" className="-mr-1" aria-hidden="true">
      <path d="M14 0h12l8 16L50 0h8L37 21l5 10-6 3-5-9L0 50l26-31z" fill="#fff" opacity="0.450" />
      <path d="M78 10C60 5 41 14 38 28c-1 8 6 12 18 9-10 0-12-5-9-11 4-9 16-14 31-16z" fill="#3f8ecb" opacity="0.850" />
      <path d="M75 16c-13-2-24 3-24 9 0 5 10 3 12 6 2 4-8 9-14 11 14 1 25-5 25-13 0-5-10-4-10-7 0-2 5-5 11-6z" fill="#4a79b8" opacity="0.800" />
      <path d="M76 22c3 10-6 22-26 21 12-2 18-7 17-13z" fill="#62c27a" opacity="0.900" />
    </svg>
    <div className="flex flex-col">
      <span className="text-[21px] leading-6 font-bold text-[#4e83bd]/75">极光下载站</span>
      <span className="font-['Liberation_Sans','Noto_Sans_CJK_SC',sans-serif] text-[15px] leading-5 font-bold text-[#3fb065]/85">www.xz7.com</span>
    </div>
  </div>
)

const App = () => {
  return (
    <div className="relative flex h-screen flex-col overflow-hidden bg-[#e7e7e7] font-['Open_Sans','Noto_Sans_CJK_SC',sans-serif] text-[12px] leading-[17px]">
      <TitleBar />
      <MenuBar />
      <Ribbon />
      <main className="flex min-h-0 flex-1 shadow-[0_-1px_2px_rgba(0,0,0,0.2)]">
        <VerticalRuler />
        <section className="flex min-w-0 flex-1 flex-col overflow-hidden bg-[#e1e1e1]">
          <HorizontalRuler />
          <div className="min-h-0 flex-1 overflow-hidden"><Page /></div>
        </section>
        <ScrollBar />
        <Panel />
        <SideBar />
      </main>
      <StatusBar />
      <SiteMark />
    </div>
  )
}

export default App
